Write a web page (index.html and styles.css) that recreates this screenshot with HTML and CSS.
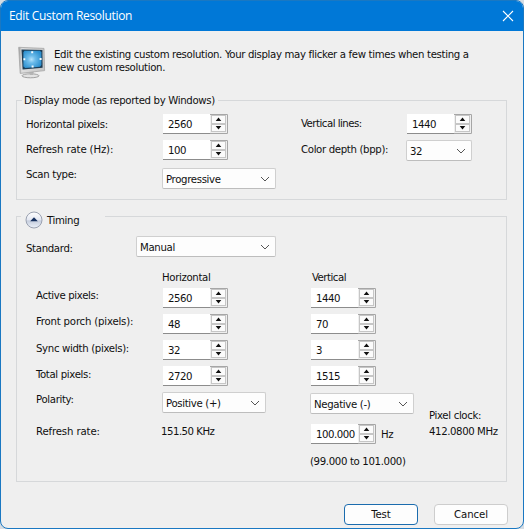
FILE: index.html
```html
<!DOCTYPE html>
<html lang="en">
<head>
<meta charset="utf-8">
<title>Edit Custom Resolution</title>
<link rel="stylesheet" href="styles.css">
</head>
<body>
<svg width="0" height="0" class="defs">
  <defs>
    <symbol id="arrows" viewBox="0 0 18 20">
      <path d="M0 .5H17.5V19.5H0" fill="#efefef" stroke="#a6a6a6"/>
      <rect x="1.5" y="1.5" width="14" height="8" fill="#fbfbfb" stroke="#c6c6c6"/>
      <rect x="1.5" y="10.5" width="14" height="7" fill="#fbfbfb" stroke="#c6c6c6"/>
      <path d="M8.5 3.4 11.3 7H5.7ZM8.5 15.4 11.3 12H5.7Z" fill="#111"/>
    </symbol>
    <symbol id="chevron" viewBox="0 0 10 6">
      <path d="M1 1 5 5 9 1" fill="none" stroke="#555" stroke-width="1"/>
    </symbol>
  </defs>
</svg>
<main class="window">
  <header class="titlebar">
    <h1>Edit Custom Resolution</h1>
    <svg class="close" viewBox="0 0 12 12"><path d="M1 1 11 11M11 1 1 11" stroke="#fff" stroke-width="1.1"/></svg>
  </header>

  <section class="intro">
    <svg class="monitor" viewBox="0 0 28 33">
      <defs>
        <radialGradient id="screen" cx=".45" cy=".5" r=".6"><stop offset="0" stop-color="#b4e2fb"/><stop offset=".35" stop-color="#6cbbea"/><stop offset="1" stop-color="#2b8fce"/></radialGradient>
        <linearGradient id="bezel"><stop offset="0" stop-color="#9a9a9a"/><stop offset=".12" stop-color="#dedede"/><stop offset="1" stop-color="#c4c4c4"/></linearGradient>
      </defs>
      <ellipse cx="12.5" cy="29.8" rx="8.5" ry="2" fill="#e3e3e3" stroke="#8f8f8f" stroke-width=".8"/>
      <path d="M11 25h5l-1 4h-3z" fill="#b5b5b5"/>
      <path d="M.7 1.3 26 2.4 26.6 24.6 2.2 27.4Z" fill="url(#bezel)" stroke="#a4a4a4" stroke-width=".8"/>
      <path d="M3.5 3.6 24.4 4 24.6 21.8 4.6 23.4Z" fill="#1d3c54"/>
      <path d="M6.4 4.8H22L23.4 6.4V19L22 20.7 7.2 22 5.4 20.4V6.4Z" fill="url(#screen)"/>
      <path d="M13.2 5.2h2v2h-2zM13.6 19.4h2v2h-2zM5.4 12.2h1.9v2H5.4zM21.6 12h2v2h-2z" fill="#f4fbff"/>
    </svg>
    <p>Edit the existing custom resolution. Your display may flicker a few times when testing a<br>new custom resolution.</p>
  </section>

  <fieldset class="group mode">
    <legend>Display mode (as reported by Windows)</legend>
    <div class="mode-grid">
      <label class="d2">Horizontal pixels:</label>
      <div class="spin"><span>2560</span><svg><use href="#arrows"/></svg></div>
      <label class="d1 tight">Vertical lines:</label>
      <div class="spin"><span>1440</span><svg><use href="#arrows"/></svg></div>

      <label class="d1 loose">Refresh rate (Hz):</label>
      <div class="spin"><span>100</span><svg><use href="#arrows"/></svg></div>
      <label class="d1">Color depth (bpp):</label>
      <div class="combo c-depth"><span>32</span><svg><use href="#chevron"/></svg></div>

      <label>Scan type:</label>
      <div class="combo c-scan"><span>Progressive</span><svg><use href="#chevron"/></svg></div>
    </div>
  </fieldset>

  <fieldset class="group timing">
    <legend>
      <span class="timing-head">
        <svg class="collapse" viewBox="0 0 18 18">
          <defs><linearGradient id="knob" x2="0" y2="1"><stop offset="0" stop-color="#fff"/><stop offset=".5" stop-color="#e3e7f1"/><stop offset=".55" stop-color="#c5cddd"/><stop offset="1" stop-color="#edf2fa"/></linearGradient></defs>
          <circle cx="9" cy="9" r="8" fill="url(#knob)" stroke="#9aa1b0"/>
          <path d="M9 6.2 12.8 10.3H5.2Z" fill="#16305e"/>
        </svg>
        <span>Timing</span>
      </span>
    </legend>
    <div class="standard">
      <label>Standard:</label>
      <div class="combo c-standard"><span>Manual</span><svg><use href="#chevron"/></svg></div>
    </div>
    <div class="timing-body">
      <div class="timing-grid">
        <span></span><label>Horizontal</label><label class="v tight">Vertical</label>

        <label class="d0">Active pixels:</label>
        <div class="spin"><span>2560</span><svg><use href="#arrows"/></svg></div>
        <div class="spin"><span>1440</span><svg><use href="#arrows"/></svg></div>

        <label class="d0 front">Front porch (pixels):</label>
        <div class="spin"><span>48</span><svg><use href="#arrows"/></svg></div>
        <div class="spin"><span>70</span><svg><use href="#arrows"/></svg></div>

        <label>Sync width (pixels):</label>
        <div class="spin"><span>32</span><svg><use href="#arrows"/></svg></div>
        <div class="spin"><span>3</span><svg><use href="#arrows"/></svg></div>

        <label>Total pixels:</label>
        <div class="spin"><span>2720</span><svg><use href="#arrows"/></svg></div>
        <div class="spin"><span>1515</span><svg><use href="#arrows"/></svg></div>

        <label class="d0">Polarity:</label>
        <div class="combo c-pol"><span>Positive (+)</span><svg><use href="#chevron"/></svg></div>
        <div class="combo c-pol lower"><span>Negative (-)</span><svg><use href="#chevron"/></svg></div>

        <label class="d0 loose">Refresh rate:</label>
        <label class="d0 khz">151.50 KHz</label>
        <div class="hz"><div class="spin"><span>100.000</span><svg><use href="#arrows"/></svg></div><label>Hz</label></div>

        <label class="range">(99.000 to 101.000)</label>
      </div>
      <div class="clock"><label>Pixel clock:</label><label class="mhz">412.0800 MHz</label></div>
    </div>
  </fieldset>

  <footer class="actions">
    <button class="btn primary">Test</button>
    <button class="btn">Cancel</button>
  </footer>
</main>
</body>
</html>
```
FILE: styles.css
```css
* { box-sizing: border-box; }
body {
  margin: 0;
  background: #d5dce3;
  font: 11.3px/16px "DejaVu Sans Condensed", "DejaVu Sans", sans-serif;
  letter-spacing: -.34px;
  color: #101010;
  overflow: hidden;
}
.defs { display: none; }
.window {
  width: 524px;
  height: 529px;
  background: #efefef;
  border: 1px solid #1a78c2;
  border-radius: 8px;
  overflow: hidden;
}
.titlebar {
  display: flex;
  align-items: center;
  justify-content: space-between;
  height: 30px;
  padding: 0 9px 0 8px;
  background: #0078d7;
}
h1 {
  margin: 0;
  font: 12px/16px "Open Sans", sans-serif;
  letter-spacing: -.32px;
  color: #fff;
}
.close { width: 12px; height: 12px; }
.intro { display: flex; height: 62px; padding: 15px 0 0 17px; }
.monitor { width: 28px; height: 33px; flex: none; }
.intro p { margin: 0 0 0 8px; line-height: 13px; padding-top: 2px; white-space: nowrap; }

.group {
  margin: 0 0 0 15px;
  width: 491px;
  padding: 0;
  border: 1px solid #d6d8da;
  min-width: 0;
}
.mode { height: 107px; }
.timing { height: 275px; margin-top: 7px; }
legend { height: 14px; line-height: 14px; }
.mode legend { margin-left: 5px; padding: 1px 3px 0 2px; }
.timing legend { height: 18px; margin-left: 4px; padding: 4px 26px 0 4px; }
.timing-head { display: flex; align-items: center; gap: 4px; height: 18px; }
.timing-head span { padding-top: 1px; }
.collapse { width: 18px; height: 18px; }
label { display: block; white-space: nowrap; padding-top: 1px; }

.mode-grid {
  display: grid;
  grid-template-columns: 136px 139px 105px 70px;
  grid-template-rows: 26px 26px 26px;
  padding: 7px 0 0 9px;
  align-items: start;
}
.d0 { margin-top: -1px; }
.d1 { margin-top: 1px; }
.d2 { margin-top: 2px; }
.tight { letter-spacing: -.5px; }
.loose { letter-spacing: -.14px; }
.front { letter-spacing: -.2px; }

.spin { display: flex; width: 65px; height: 20px; margin-left: 1px; background: #fff; }
.spin span {
  width: 47px;
  height: 20px;
  padding: 1px 0 0 5px;
  line-height: 20px;
  letter-spacing: -.45px;
  border-bottom: 1px solid #8c8c8c;
}
.spin svg { width: 18px; height: 20px; flex: none; }

.combo {
  display: flex;
  align-items: center;
  justify-content: space-between;
  height: 21px;
  padding: 0 5px 0 3px;
  background: #fdfdfd;
  border: 1px solid #cfcfcf;
  border-bottom-color: #bdbdbd;
  border-radius: 2px;
}
.combo span { padding-top: 2px; }
.combo svg { width: 10px; height: 6px; flex: none; }
.c-depth { width: 66px; }
.c-scan { width: 114px; margin-top: 2px; }
.c-standard { width: 140px; }
.c-pol { width: 104px; }
.lower { margin-top: 1px; }

.standard { display: flex; align-items: center; height: 21px; margin-top: 11px; padding-left: 9px; }
.standard label { width: 110px; padding-top: 4px; }
.timing-body { display: flex; margin-top: 12px; }
.timing-grid {
  display: grid;
  grid-template-columns: 126px 148px 118px;
  grid-template-rows: 19px 26px 26px 26px 26px 32px 29px 20px;
  width: 392px;
  padding-left: 19px;
  align-items: start;
}
.timing-grid .v { padding-left: 2px; }
.khz { letter-spacing: -.5px; margin-left: -1px; }
.hz { display: flex; align-items: center; gap: 5px; }
.range { grid-column: 3; letter-spacing: -.35px; }
.clock { padding: 139px 0 0 20px; }
.clock label { padding: 0; }
.mhz { letter-spacing: -.4px; }

.actions { display: flex; justify-content: flex-end; gap: 16px; margin-top: 22px; padding-right: 15px; }
.btn {
  width: 74px;
  height: 21px;
  padding: 1px 0 0;
  font: inherit;
  letter-spacing: -.1px;
  color: #101010;
  background: #fdfdfd;
  border: 1px solid #cdcdcd;
  border-radius: 4px;
}
.primary { border-color: #1b6cae; }
```
